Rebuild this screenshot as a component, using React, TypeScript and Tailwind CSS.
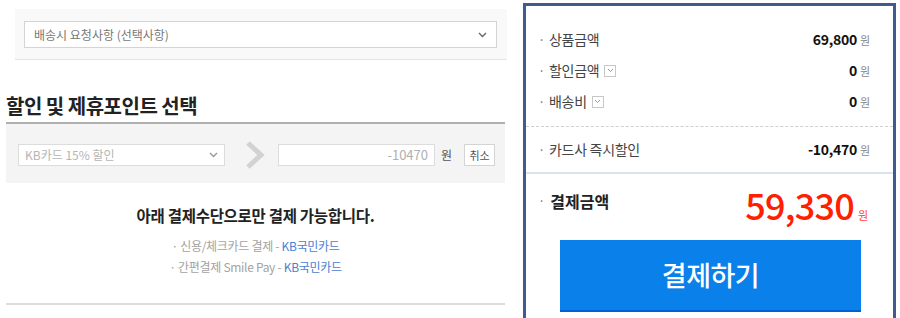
import React from 'react';

const font = { fontFamily: '"Noto Sans CJK KR", "Noto Sans", sans-serif' };

const Chevron = ({ className = '' }: { className?: string }) => (
  <svg width="9" height="6" viewBox="0 0 9 6" className={className}>
    <path d="M1 1l3.5 3.5L8 1" fill="none" stroke="currentColor" strokeWidth="1.4" />
  </svg>
);

const SmallToggle = () => (
  <span className="inline-flex items-center justify-center w-[12px] h-[12px] border border-[#c8c8c8] bg-white text-[#999] ml-[5px]">
    <svg width="7" height="5" viewBox="0 0 7 5">
      <path d="M1 1l2.5 2.5L6 1" fill="none" stroke="currentColor" strokeWidth="1" />
    </svg>
  </span>
);

const PriceRow = ({ label, value, toggle }: { label: string; value: string; toggle?: boolean }) => (
  <div className="flex items-center justify-between h-[31px] pl-[12px] pr-[23px]">
    <div className="flex items-center text-[14px] text-[#444] tracking-[-0.3px]">
      <span className="mr-[4px] text-[#777] text-[13px]">·</span>
      {label}
      {toggle && <SmallToggle />}
    </div>
    <div className="flex items-baseline">
      <span className="text-[14px] font-bold text-[#111] tracking-[-0.3px]">{value}</span>
      <span className="text-[11px] text-[#888] ml-[3px]">원</span>
    </div>
  </div>
);

export default function App() {
  return (
    <div className="w-[900px] h-[318px] bg-white flex overflow-hidden" style={font}>
      {/* left column */}
      <div className="w-[523px] flex flex-col">
        <div className="ml-[15px] mt-[9px] w-[492px] h-[51px] bg-[#f9f9f9] border-b border-[#e3e3e3] pt-[12px] pl-[9px]">
          <div className="w-[473px] h-[27px] bg-white border border-[#d4d4d4] flex items-center justify-between px-[9px] text-[12px] text-[#777]">
            <span>배송시 요청사항 (선택사항)</span>
            <Chevron className="text-[#666]" />
          </div>
        </div>

        <h2 className="mt-[33px] ml-[6px] text-[20px] font-bold text-[#222] leading-[26px] tracking-[-0.5px]">
          할인 및 제휴포인트 선택
        </h2>
        <div className="ml-[6px] w-[499px] mt-[3px] border-t-2 border-[#b0b0b0] h-[61px] bg-[#f4f4f4] flex items-center pl-[12px] pt-[3px]">
          <div className="w-[207px] h-[22px] bg-white border border-[#dcdcdc] flex items-center justify-between pl-[6px] pr-[6px] text-[12px] text-[#b5b5b5]">
            <span>KB카드 15% 할인</span>
            <Chevron className="text-[#999]" />
          </div>
          <svg width="22" height="28" viewBox="0 0 22 28" className="ml-[19px]">
            <path d="M4 2l13 12L4 26" fill="none" stroke="#d2d2d2" strokeWidth="5" />
          </svg>
          <div className="ml-[12px] w-[157px] h-[22px] bg-white border border-[#dcdcdc] flex items-center justify-end pr-[6px] text-[13px] text-[#b0b0b0]">
            -10470
          </div>
          <span className="ml-[6px] text-[12px] text-[#555]">원</span>
          <div className="ml-[12px] w-[31px] h-[22px] bg-white border border-[#d4d4d4] flex items-center justify-center text-[11px] text-[#555]">
            취소
          </div>
        </div>

        <div className="flex flex-col items-center w-[511px]">
          <p className="mt-[21px] text-[15.5px] font-bold text-[#222] leading-[22px] tracking-[-0.3px]">
            아래 결제수단으로만 결제 가능합니다.
          </p>
          <p className="mt-[11px] text-[12px] text-[#a3a3a3] leading-[17px] tracking-[-0.3px]">
            · 신용/체크카드 결제 - <span className="text-[#4b80d4]">KB국민카드</span>
          </p>
          <p className="mt-[4px] text-[12px] text-[#a3a3a3] leading-[17px] tracking-[-0.3px]">
            · 간편결제 Smile Pay - <span className="text-[#4b80d4]">KB국민카드</span>
          </p>
        </div>
        <div className="ml-[6px] w-[499px] mt-[28px] border-t-2 border-[#dcdcdc]" />
      </div>

      {/* right summary panel */}
      <div className="mt-[3px] w-[373px] h-[330px] border-[3px] border-[#3f5b8f] flex flex-col">
        <div className="pt-[18px] pb-[9px]">
          <PriceRow label="상품금액" value="69,800" />
          <PriceRow label="할인금액" value="0" toggle />
          <PriceRow label="배송비" value="0" toggle />
        </div>
        <div className="border-t border-dashed border-[#cfcfcf]" />
        <div className="py-[7px]">
          <PriceRow label="카드사 즉시할인" value="-10,470" />
        </div>
        <div className="border-t-2 border-[#dce3ea]" />
        <div className="flex items-center justify-between h-[60px] pl-[12px] pr-[25px]">
          <div className="flex items-center text-[16px] font-bold text-[#222] mt-[-6px]">
            <span className="mr-[5px] text-[#777] font-normal text-[13px]">·</span>
            결제금액
          </div>
          <div className="flex items-baseline">
            <span className="text-[36px] font-medium text-[#ff2000] leading-[40px] tracking-[-0.8px]">
              59,330
            </span>
            <span className="text-[11px] text-[#ff4a2a] ml-[4px]">원</span>
          </div>
        </div>
        <div className="ml-[34px] mt-[6px] w-[301px] h-[72px] bg-[#0a80ea] border-b-2 border-[#0062d0] flex items-center justify-center text-white text-[27px] font-medium tracking-[-0.5px]">
          결제하기
        </div>
      </div>
    </div>
  );
}
